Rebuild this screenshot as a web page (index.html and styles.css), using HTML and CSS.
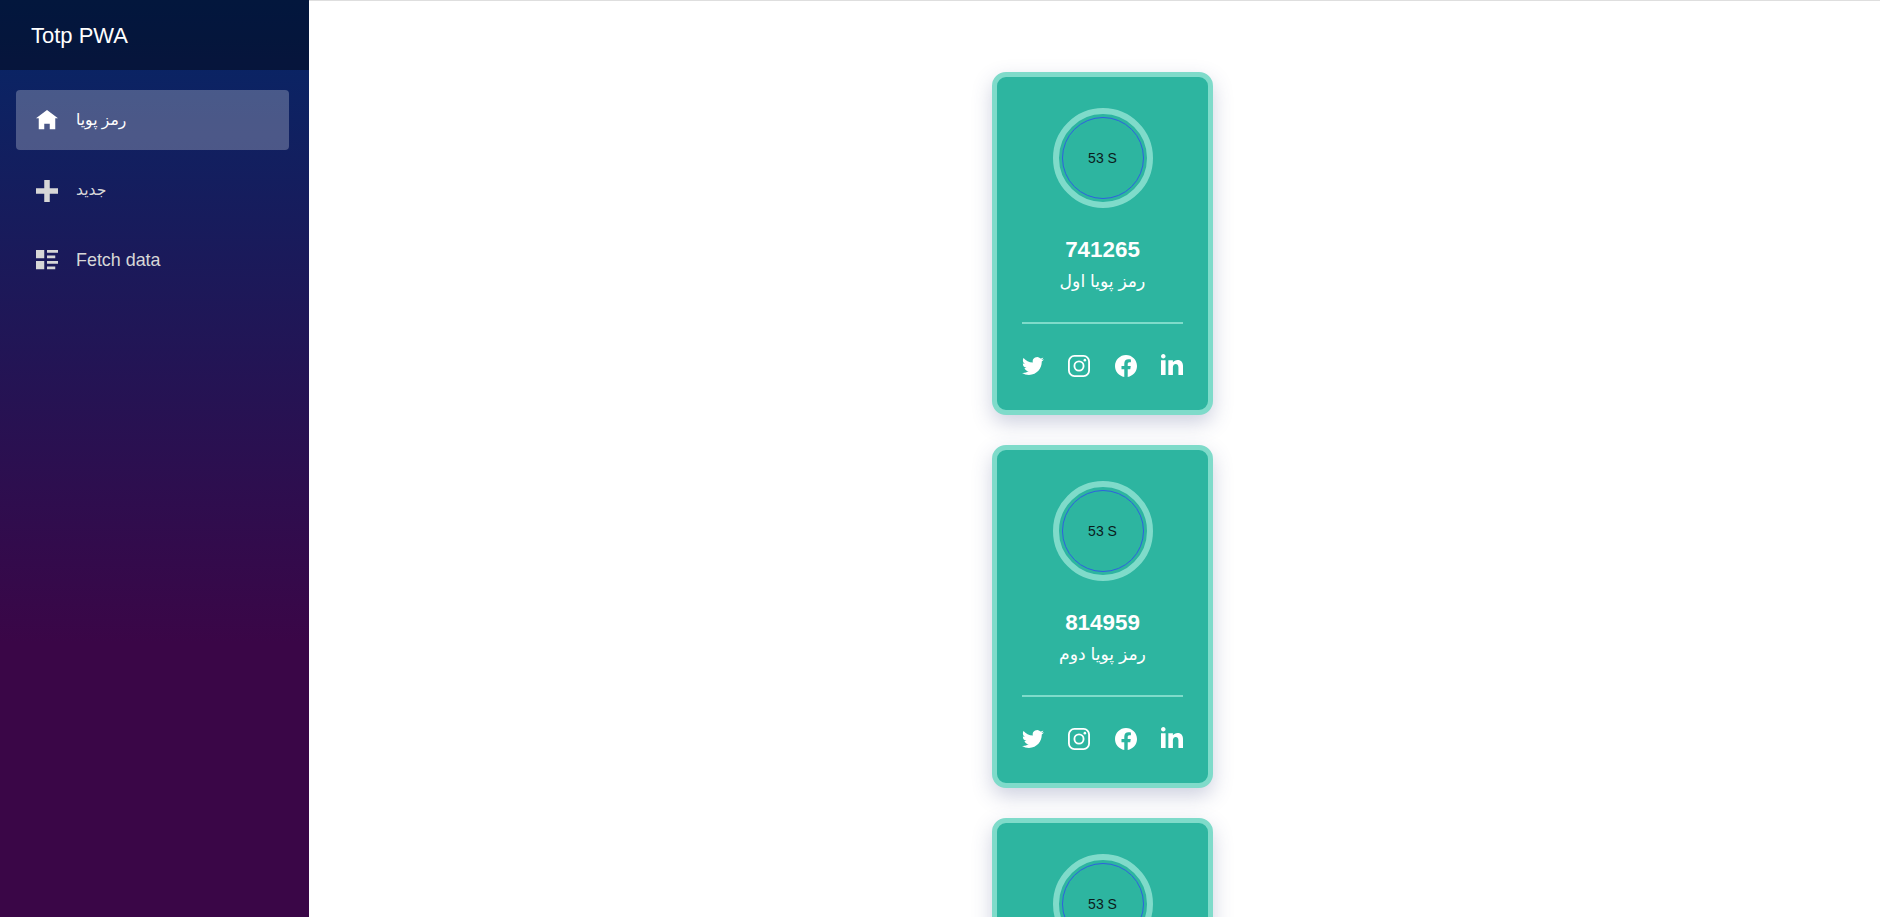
FILE: index.html
```html
<!DOCTYPE html>
<html lang="fa">
<head>
<meta charset="utf-8">
<title>Totp PWA</title>
<link rel="stylesheet" href="styles.css">
</head>
<body>
<div class="app">
  <aside class="sidebar">
    <div class="brand">Totp PWA</div>
    <nav class="nav">
      <a class="nav-link active"><svg class="oi" viewBox="0 0 8 8"><path d="M4 0l-4 3h1v4h2v-2h2v2h2v-4.03l1 .03-4-3z"/></svg><span class="ar">رمز پویا</span></a>
      <a class="nav-link"><svg class="oi" viewBox="0 0 8 8"><path d="M3 0v3h-3v2h3v3h2v-3h3v-2h-3v-3h-2z"/></svg><span class="ar">جدید</span></a>
      <a class="nav-link"><svg class="oi" viewBox="0 0 8 8"><path d="M0 0v3h3v-3h-3zm4 0v1h4v-1h-4zm0 2v1h3v-1h-3zm-4 2v3h3v-3h-3zm4 0v1h4v-1h-4zm0 2v1h3v-1h-3z"/></svg><span>Fetch data</span></a>
    </nav>
  </aside>
  <main class="main">
    <article class="card">
      <div class="timer"><div class="ring">53 S</div></div>
      <div class="code">741265</div>
      <div class="label">رمز پویا اول</div>
      <hr class="rule">
      <div class="social">
        <svg class="ico" viewBox="0 0 24 24"><path d="M23.953 4.57a10 10 0 01-2.825.775 4.958 4.958 0 002.163-2.723c-.951.555-2.005.959-3.127 1.184a4.92 4.92 0 00-8.384 4.482C7.69 8.095 4.067 6.13 1.64 3.162a4.822 4.822 0 00-.666 2.475c0 1.71.87 3.213 2.188 4.096a4.904 4.904 0 01-2.228-.616v.06a4.923 4.923 0 003.946 4.827 4.996 4.996 0 01-2.212.085 4.936 4.936 0 004.604 3.417 9.867 9.867 0 01-6.102 2.105c-.39 0-.779-.023-1.17-.067a13.995 13.995 0 007.557 2.209c9.053 0 13.998-7.496 13.998-13.985 0-.21 0-.42-.015-.63A9.935 9.935 0 0024 4.59z"/></svg>
        <svg class="ico" viewBox="0 0 24 24"><rect class="line" x="1" y="1" width="22" height="22" rx="6"/><circle class="line" cx="12" cy="12" r="5"/><circle cx="18.4" cy="5.6" r="1.4"/></svg>
        <svg class="ico" viewBox="0 0 24 24"><path d="M24 12.073c0-6.627-5.373-12-12-12s-12 5.373-12 12c0 5.99 4.388 10.954 10.125 11.854v-8.385H7.078v-3.47h3.047V9.43c0-3.007 1.792-4.669 4.533-4.669 1.312 0 2.686.235 2.686.235v2.953H15.83c-1.491 0-1.956.925-1.956 1.874v2.25h3.328l-.532 3.47h-2.796v8.385C19.612 23.027 24 18.062 24 12.073z"/></svg>
        <svg class="ico ico-in" viewBox="0 0 24 24"><path d="M4.98 3.5C4.98 4.881 3.87 6 2.5 6S.02 4.881.02 3.5C.02 2.12 1.13 1 2.5 1s2.48 1.12 2.48 2.5zM5 8H0v16h5V8zm7.982 0H8.014v16h4.969v-8.399c0-4.67 6.029-5.052 6.029 0V24H24V13.869c0-7.88-8.922-7.593-11.018-3.714V8z"/></svg>
      </div>
    </article>
    <article class="card">
      <div class="timer"><div class="ring">53 S</div></div>
      <div class="code">814959</div>
      <div class="label">رمز پویا دوم</div>
      <hr class="rule">
      <div class="social">
        <svg class="ico" viewBox="0 0 24 24"><path d="M23.953 4.57a10 10 0 01-2.825.775 4.958 4.958 0 002.163-2.723c-.951.555-2.005.959-3.127 1.184a4.92 4.92 0 00-8.384 4.482C7.69 8.095 4.067 6.13 1.64 3.162a4.822 4.822 0 00-.666 2.475c0 1.71.87 3.213 2.188 4.096a4.904 4.904 0 01-2.228-.616v.06a4.923 4.923 0 003.946 4.827 4.996 4.996 0 01-2.212.085 4.936 4.936 0 004.604 3.417 9.867 9.867 0 01-6.102 2.105c-.39 0-.779-.023-1.17-.067a13.995 13.995 0 007.557 2.209c9.053 0 13.998-7.496 13.998-13.985 0-.21 0-.42-.015-.63A9.935 9.935 0 0024 4.59z"/></svg>
        <svg class="ico" viewBox="0 0 24 24"><rect class="line" x="1" y="1" width="22" height="22" rx="6"/><circle class="line" cx="12" cy="12" r="5"/><circle cx="18.4" cy="5.6" r="1.4"/></svg>
        <svg class="ico" viewBox="0 0 24 24"><path d="M24 12.073c0-6.627-5.373-12-12-12s-12 5.373-12 12c0 5.99 4.388 10.954 10.125 11.854v-8.385H7.078v-3.47h3.047V9.43c0-3.007 1.792-4.669 4.533-4.669 1.312 0 2.686.235 2.686.235v2.953H15.83c-1.491 0-1.956.925-1.956 1.874v2.25h3.328l-.532 3.47h-2.796v8.385C19.612 23.027 24 18.062 24 12.073z"/></svg>
        <svg class="ico ico-in" viewBox="0 0 24 24"><path d="M4.98 3.5C4.98 4.881 3.87 6 2.5 6S.02 4.881.02 3.5C.02 2.12 1.13 1 2.5 1s2.48 1.12 2.48 2.5zM5 8H0v16h5V8zm7.982 0H8.014v16h4.969v-8.399c0-4.67 6.029-5.052 6.029 0V24H24V13.869c0-7.88-8.922-7.593-11.018-3.714V8z"/></svg>
      </div>
    </article>
    <article class="card">
      <div class="timer"><div class="ring">53 S</div></div>
    </article>
  </main>
</div>
</body>
</html>
```
FILE: styles.css
```css
* { box-sizing: border-box; }
html, body { margin: 0; height: 100%; overflow: hidden; }
body { font-family: "Liberation Sans", "DejaVu Sans", sans-serif; background: #fff; }
.app { display: flex; height: 917px; border-top: 1px solid #dedede; }
.sidebar {
  width: 309px; flex: none; margin-top: -1px;
  background: linear-gradient(180deg, #052767 0%, #3a0647 70%);
}
.brand {
  height: 70px; padding: 1px 0 0 31px; display: flex; align-items: center;
  background: rgba(0,0,0,.4); color: #fff; font-size: 22px;
}
.nav { padding: 20px 20px 0 16px; display: flex; flex-direction: column; gap: 10px; }
.nav-link {
  height: 60px; display: flex; align-items: center; padding-left: 20px; border-radius: 4px;
  color: #d7d7d7; font-size: 17.9px;
}
.nav-link.active { background: rgba(255,255,255,.25); color: #fff; }
.ar { font-size: 15.6px; }
.oi { width: 22px; height: 22px; margin: 2px 18px 0 0; fill: currentColor; flex: none; }
.main { flex: 1; display: flex; flex-direction: column; align-items: center; padding: 71px 0 0 16px; gap: 30px; overflow: hidden; }
.card {
  width: 221px; height: 343px; flex: none; padding: 31px 25px 0;
  background: #2db5a0; border: 5px solid #7fdbca; border-radius: 14px;
  box-shadow: 0 8px 20px rgba(60,70,130,.25);
  display: flex; flex-direction: column; align-items: center; color: #fff;
}
.timer {
  width: 100px; height: 100px; flex: none; border: 6px solid #7fdbca; border-radius: 50%;
  display: flex; align-items: center; justify-content: center;
}
.ring {
  width: 82px; height: 82px; border: 1px solid #2f5fe0; border-radius: 50%;
  display: flex; align-items: center; justify-content: center; color: #0b1c1c; font-size: 14px;
}
.code { margin-top: 28px; font-size: 22.4px; font-weight: 700; line-height: 28px; }
.label { margin-top: 3px; font-size: 17.2px; line-height: 28px; }
.rule { width: 161px; margin: 27px 0 0; border: 0; height: 2px; background: #7fdbca; }
.social { width: 161px; margin-top: 31px; display: flex; justify-content: space-between; align-items: flex-start; }
.ico { width: 22px; height: 22px; fill: #fff; }
.ico-in { margin-top: -2px; }
.ico .line { fill: none; stroke: #fff; stroke-width: 2; }
```
